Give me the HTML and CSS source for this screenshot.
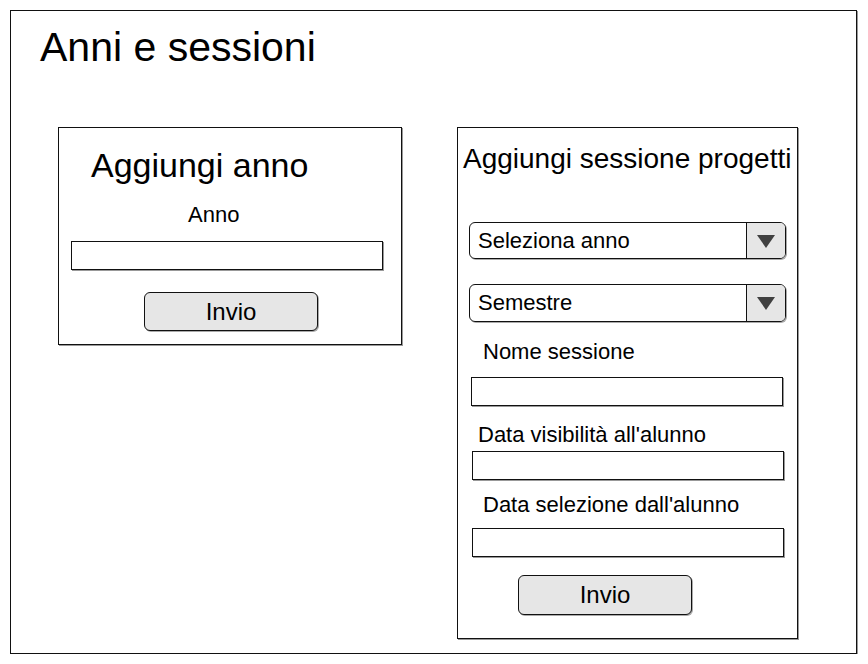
FILE: index.html
```html
<!DOCTYPE html>
<html lang="it">
<head>
<meta charset="utf-8">
<title>Anni e sessioni</title>
<link rel="stylesheet" href="styles.css">
</head>
<body>
<div class="frame">
  <div class="page-head">
    <h1 class="page-title">Anni e sessioni</h1>
  </div>
  <div class="panels">
    <section class="panel panel-year">
      <h2 class="year-title">Aggiungi anno</h2>
      <div class="label label-anno">Anno</div>
      <div class="input input-anno"></div>
      <div class="button button-year">Invio</div>
    </section>
    <section class="panel panel-session">
      <h2 class="session-title">Aggiungi sessione progetti</h2>
      <div class="select select-anno">
        <span class="select-text">Seleziona anno</span>
        <span class="select-arrow"><svg width="18" height="13" viewBox="0 0 18 13"><polygon points="0,0 18,0 9,13" fill="#404040"/></svg></span>
      </div>
      <div class="select select-sem">
        <span class="select-text">Semestre</span>
        <span class="select-arrow"><svg width="18" height="13" viewBox="0 0 18 13"><polygon points="0,0 18,0 9,13" fill="#404040"/></svg></span>
      </div>
      <div class="label label-nome">Nome sessione</div>
      <div class="input input-nome"></div>
      <div class="label label-vis">Data visibilità all'alunno</div>
      <div class="input input-vis"></div>
      <div class="label label-sel">Data selezione dall'alunno</div>
      <div class="input input-sel"></div>
      <div class="button button-session">Invio</div>
    </section>
  </div>
</div>
</body>
</html>
```
FILE: styles.css
```css
* { box-sizing: border-box; }
html, body { margin: 0; padding: 0; background: #fff; }
body {
  font-family: "Liberation Sans", Arial, Helvetica, sans-serif;
  color: #000;
}
.frame {
  margin: 10px 0 0 10px;
  width: 847px;
  height: 644px;
  border: 1px solid #111;
  box-shadow: 1px 1px 0 #999;
  background: #fff;
}
.page-head {
  height: 116px;
  padding: 16px 0 0 29px;
}
.page-title {
  margin: 0;
  font-size: 41px;
  line-height: 41px;
  font-weight: normal;
}
.panels {
  display: flex;
  align-items: flex-start;
  padding-left: 47px;
  gap: 55px;
}
.panel {
  border: 1px solid #111;
  box-shadow: 1px 1px 0 #999;
  display: flex;
  flex-direction: column;
  align-items: flex-start;
}
.panel-year { width: 344px; height: 218px; }
.panel-session { width: 341px; height: 512px; }

.year-title {
  margin: 20px 0 0 32px;
  font-size: 34px;
  line-height: 34px;
  font-weight: normal;
}
.session-title {
  margin: 17px 0 0 5px;
  font-size: 28px;
  line-height: 28px;
  font-weight: normal;
  white-space: nowrap;
}
.label {
  font-size: 22px;
  line-height: 22px;
  white-space: nowrap;
}
.input {
  width: 312px;
  height: 29px;
  border: 1px solid #111;
  box-shadow: 1px 1px 0 #999;
  background: #fff;
}
.button {
  width: 174px;
  height: 39px;
  border: 1px solid #111;
  border-radius: 6px;
  background: #e6e6e6;
  box-shadow: 1px 1px 0 #aaa;
  display: flex;
  align-items: center;
  justify-content: center;
  font-size: 24px;
  line-height: 24px;
}

.label-anno { margin: 22px 0 0 129px; }
.input-anno { margin: 15px 0 0 12px; }
.button-year { margin: 22px 0 0 85px; }

.select {
  width: 317px;
  border: 1px solid #111;
  border-radius: 6px;
  box-shadow: 1px 1px 0 #aaa;
  overflow: hidden;
  display: flex;
  align-items: stretch;
  margin-left: 11px;
}
.select-anno { height: 37px; margin-top: 49px; }
.select-sem { height: 38px; margin-top: 25px; }
.select-text {
  flex: 1;
  display: flex;
  align-items: center;
  padding-left: 8px;
  font-size: 22px;
  line-height: 22px;
}
.select-arrow {
  width: 39px;
  border-left: 1px solid #111;
  background: #e6e6e6;
  display: flex;
  align-items: center;
  justify-content: center;
  padding-top: 1px;
}
.select-arrow svg { display: block; }

.label-nome { margin: 19px 0 0 25px; }
.input-nome { margin: 14px 0 0 13px; }
.label-vis { margin: 18px 0 0 20px; }
.input-vis { margin: 5px 0 0 14px; }
.label-sel { margin: 14px 0 0 25px; }
.input-sel { margin: 12px 0 0 14px; }
.button-session { height: 40px; margin: 18px 0 0 60px; }
```
